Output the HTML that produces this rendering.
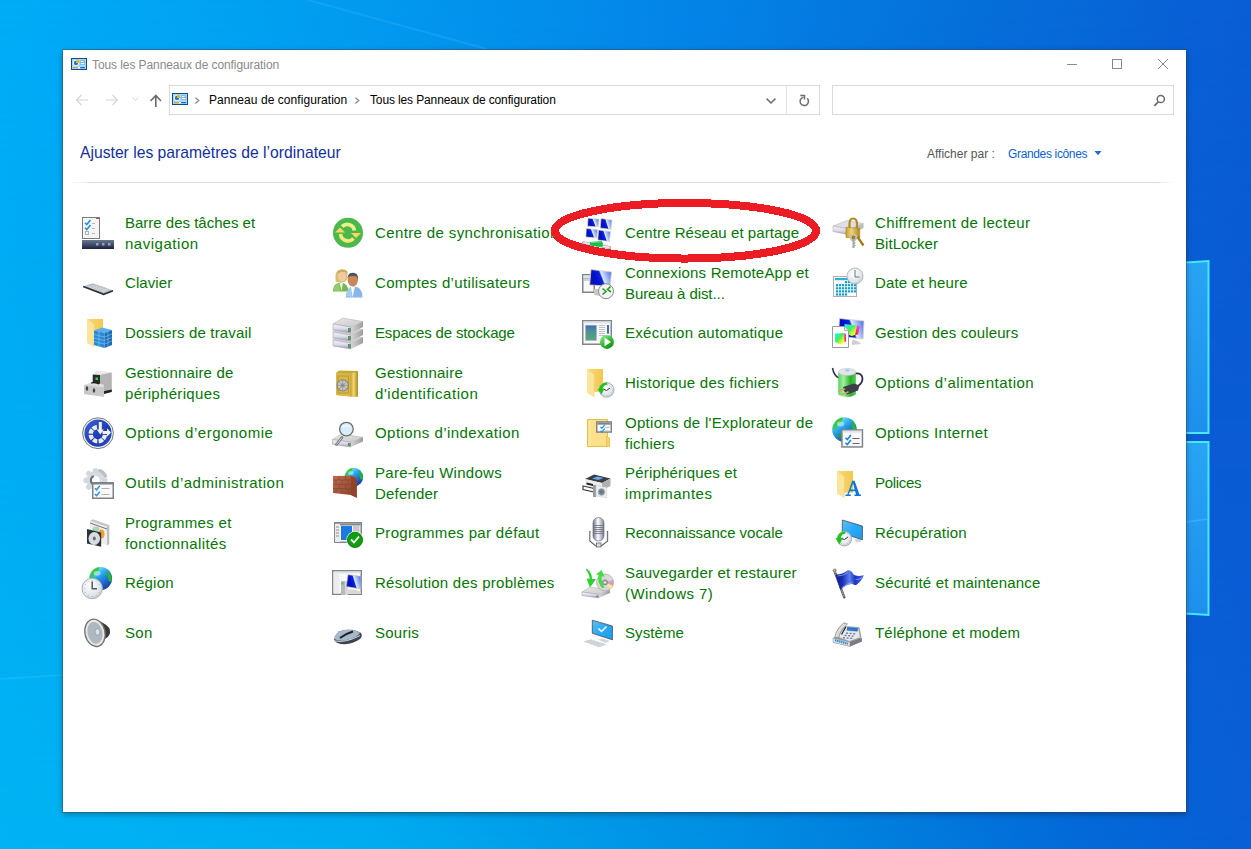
<!DOCTYPE html>
<html><head><meta charset="utf-8">
<style>
*{margin:0;padding:0;box-sizing:border-box}
html,body{width:1251px;height:849px;overflow:hidden;background:#0a80e0}
body{position:relative;font-family:"Liberation Sans",sans-serif}
#bg{position:absolute;left:0;top:0}
#win{position:absolute;left:63px;top:50px;width:1123px;height:762px;background:#fff;box-shadow:0 0 0 1px rgba(60,70,80,.4),0 2px 6px rgba(0,20,40,.4)}
.t{position:absolute;white-space:nowrap}
.it{position:absolute;color:#067406;font-size:15px;line-height:21px;white-space:nowrap}
.ic{position:absolute;overflow:visible}

</style></head><body>
<svg id="bg" width="1251" height="849" viewBox="0 0 1251 849">
<defs>
<linearGradient id="g1" gradientUnits="userSpaceOnUse" x1="0" y1="0" x2="1251" y2="300">
<stop offset="0" stop-color="#00acf6"/>
<stop offset="0.25" stop-color="#019cf0"/>
<stop offset="0.5" stop-color="#0386e8"/>
<stop offset="0.75" stop-color="#056ed8"/>
<stop offset="1" stop-color="#0a58d2"/>
</linearGradient>
<linearGradient id="g2" gradientUnits="userSpaceOnUse" x1="0" y1="849" x2="1251" y2="700">
<stop offset="0" stop-color="#00b4f4"/>
<stop offset="0.3" stop-color="#00acf0"/>
<stop offset="0.6" stop-color="#008ce2"/>
<stop offset="0.85" stop-color="#046ad8"/>
<stop offset="1" stop-color="#0a5ed6"/>
</linearGradient>
<linearGradient id="gv" x1="0" y1="0" x2="0" y2="1">
<stop offset="0" stop-color="#fff"/><stop offset="1" stop-color="#000"/>
</linearGradient>
<mask id="mv"><rect width="1251" height="849" fill="url(#gv)"/></mask>
</defs>
<rect width="1251" height="849" fill="url(#g2)"/>
<rect width="1251" height="849" fill="url(#g1)" mask="url(#mv)"/>
<path d="M308 0 L487 49" stroke="#30b0ff" stroke-width="2" opacity="0.35"/>
<path d="M0 679 L64 675" stroke="#40c8ff" stroke-width="1.5" opacity="0.35"/>
<!-- windows logo panes -->
<defs><linearGradient id="gp" x1="0" y1="0" x2="0" y2="1"><stop offset="0" stop-color="#28a4f4"/><stop offset="1" stop-color="#1e90ec"/></linearGradient></defs>
<path d="M1100 268 L1208.5 261 L1208.5 433 L1100 433Z" fill="url(#gp)" stroke="#48e8ff" stroke-width="2"/>
<path d="M1100 442 L1208.5 442 L1208.5 615 L1100 608Z" fill="url(#gp)" stroke="#48e8ff" stroke-width="2"/>
<path d="M1186 522 L1208 519" stroke="#50c0ff" stroke-width="1.5" opacity="0.5"/>
</svg>

<svg width="0" height="0" style="position:absolute"><defs>
<linearGradient id="gGlobe" x1="0.2" y1="0.1" x2="0.8" y2="0.95"><stop offset="0" stop-color="#7fe6ff"/><stop offset="0.35" stop-color="#28a8e8"/><stop offset="0.75" stop-color="#1b5fc8"/><stop offset="1" stop-color="#1a3a9a"/></linearGradient>
<radialGradient id="gClock" cx="0.4" cy="0.35" r="0.7"><stop offset="0" stop-color="#ffffff"/><stop offset="0.7" stop-color="#e2e6ea"/><stop offset="1" stop-color="#c4c9cf"/></radialGradient>
<linearGradient id="gDriveF" x1="0" y1="0" x2="0" y2="1"><stop offset="0" stop-color="#f4f4fb"/><stop offset="0.5" stop-color="#dcdcee"/><stop offset="1" stop-color="#9a9aa6"/></linearGradient>
<linearGradient id="gDriveT" x1="0" y1="0" x2="1" y2="1"><stop offset="0" stop-color="#e8e8e8"/><stop offset="1" stop-color="#c8c8c8"/></linearGradient>
<linearGradient id="gDriveS" x1="0" y1="0" x2="1" y2="0"><stop offset="0" stop-color="#d6d6d6"/><stop offset="1" stop-color="#9c9c9c"/></linearGradient>
<linearGradient id="gMon" x1="0" y1="0.3" x2="1" y2="0"><stop offset="0" stop-color="#0a14b0"/><stop offset="0.2" stop-color="#0010d0"/><stop offset="0.43" stop-color="#0a28d8"/><stop offset="0.5" stop-color="#e0eaff"/><stop offset="0.65" stop-color="#a8c0ff"/><stop offset="1" stop-color="#3a5ef0"/></linearGradient>
<linearGradient id="gMon10" x1="0" y1="0" x2="1" y2="1"><stop offset="0" stop-color="#5cc0f8"/><stop offset="0.5" stop-color="#2aa8f6"/><stop offset="1" stop-color="#1a9cf0"/></linearGradient>
<linearGradient id="gTask" x1="0" y1="0" x2="0" y2="1"><stop offset="0" stop-color="#6a7894"/><stop offset="1" stop-color="#1a2340"/></linearGradient>
<linearGradient id="gFold" x1="0" y1="0" x2="1" y2="0"><stop offset="0" stop-color="#f8d878"/><stop offset="1" stop-color="#f2c84e"/></linearGradient>
<linearGradient id="gGreenBall" x1="0.2" y1="0.1" x2="0.8" y2="1"><stop offset="0" stop-color="#7ee07e"/><stop offset="0.5" stop-color="#2cb82c"/><stop offset="1" stop-color="#138a13"/></linearGradient>
<linearGradient id="gGold" x1="0" y1="0" x2="1" y2="0"><stop offset="0" stop-color="#c8a030"/><stop offset="0.4" stop-color="#f0d670"/><stop offset="1" stop-color="#b08820"/></linearGradient>
<linearGradient id="gBatt" x1="0" y1="0" x2="1" y2="0"><stop offset="0" stop-color="#5ed05e"/><stop offset="0.3" stop-color="#9ef09e"/><stop offset="0.7" stop-color="#28b028"/><stop offset="1" stop-color="#58c858"/></linearGradient>
<linearGradient id="gFlag" x1="0" y1="0" x2="1" y2="0"><stop offset="0" stop-color="#0a1890"/><stop offset="0.25" stop-color="#1830b8"/><stop offset="0.5" stop-color="#6080e8"/><stop offset="0.7" stop-color="#1a34c0"/><stop offset="1" stop-color="#4a6ae8"/></linearGradient>
<linearGradient id="gBrick" x1="0" y1="0" x2="1" y2="1"><stop offset="0" stop-color="#c86a4a"/><stop offset="1" stop-color="#8a3a22"/></linearGradient>
<linearGradient id="gErgo" x1="0" y1="0" x2="1" y2="1"><stop offset="0" stop-color="#3a64d8"/><stop offset="0.6" stop-color="#1c3cb0"/><stop offset="1" stop-color="#3050d0"/></linearGradient>
<linearGradient id="gCube" x1="0" y1="0" x2="1" y2="1"><stop offset="0" stop-color="#20f0ff"/><stop offset="0.45" stop-color="#40f060"/><stop offset="0.8" stop-color="#ffff20"/><stop offset="1" stop-color="#ffd000"/></linearGradient>
<linearGradient id="gCubeS" x1="0" y1="0" x2="0" y2="1"><stop offset="0" stop-color="#ff40ff"/><stop offset="1" stop-color="#ff2020"/></linearGradient>
</defs></svg>
<div id="win">
<svg style="position:absolute;left:0;top:0" width="1123" height="762" viewBox="63 50 1123 762">
<!-- title icon -->
<g transform="translate(71,58)">
<rect x="0.5" y="0.5" width="15" height="11" fill="#a9d9fa" stroke="#0c4c8c"/>
<circle cx="5" cy="5" r="2.9" fill="#fff"/>
<circle cx="5" cy="5" r="2.2" fill="#1a7ad6"/>
<path d="M5 1.6 A3.4 3.4 0 0 1 8.4 5 L5 5Z" fill="#f8b014"/>
<rect x="9.2" y="2.3" width="4.8" height="4.4" fill="#5eb4f2"/>
<rect x="9.8" y="3" width="3.6" height="1.1" fill="#fff"/><rect x="12.6" y="3" width="1" height="1.1" fill="#f08a10"/>
<rect x="9.8" y="5" width="3.6" height="1.1" fill="#fff"/>
<rect x="2" y="9" width="5" height="1.2" fill="#f29a10"/><rect x="7" y="9" width="2" height="1.2" fill="#fff"/><rect x="9.2" y="9" width="4.8" height="1.2" fill="#1a6ad0"/>
</g>
<!-- window controls -->
<rect x="1067" y="64" width="10" height="1" fill="#8a8a8a"/>
<rect x="1112.5" y="59.5" width="9" height="9" fill="none" stroke="#8a8a8a" stroke-width="1"/>
<path d="M1158 59 L1168 69 M1168 59 L1158 69" stroke="#8a8a8a" stroke-width="1"/>
<!-- nav arrows -->
<path d="M76.5 100 H88 M81.5 95 L76.5 100 L81.5 105" fill="none" stroke="#d4d4d4" stroke-width="1.2"/>
<path d="M106 100 H117.5 M112.5 95 L117.5 100 L112.5 105" fill="none" stroke="#d4d4d4" stroke-width="1.2"/>
<path d="M132.5 97.5 L135.5 100.5 L138.5 97.5" fill="none" stroke="#d4d4d4" stroke-width="1"/>
<path d="M155.8 107 V96 M150.5 101 L155.8 95.5 L161 101" fill="none" stroke="#6b6b6b" stroke-width="1.6"/>
<!-- address box -->
<rect x="169.5" y="85.5" width="650" height="29" fill="#fff" stroke="#d9d9d9"/>
<rect x="786" y="86" width="1" height="28" fill="#e3e3e3"/>
<g transform="translate(172,93)">
<rect x="0.5" y="0.5" width="15" height="11" fill="#a9d9fa" stroke="#0c4c8c"/>
<circle cx="5" cy="5" r="2.9" fill="#fff"/>
<circle cx="5" cy="5" r="2.2" fill="#1a7ad6"/>
<path d="M5 1.6 A3.4 3.4 0 0 1 8.4 5 L5 5Z" fill="#f8b014"/>
<rect x="9.2" y="2.3" width="4.8" height="4.4" fill="#5eb4f2"/>
<rect x="9.8" y="3" width="3.6" height="1.1" fill="#fff"/><rect x="12.6" y="3" width="1" height="1.1" fill="#f08a10"/>
<rect x="9.8" y="5" width="3.6" height="1.1" fill="#fff"/>
<rect x="2" y="9" width="5" height="1.2" fill="#f29a10"/><rect x="7" y="9" width="2" height="1.2" fill="#fff"/><rect x="9.2" y="9" width="4.8" height="1.2" fill="#1a6ad0"/>
</g>
<path d="M195.3 97.7 L198.8 100.6 L195.3 103.5" fill="none" stroke="#8a8a8a" stroke-width="1.3"/>
<path d="M355.3 97.7 L358.8 100.6 L355.3 103.5" fill="none" stroke="#8a8a8a" stroke-width="1.3"/>
<path d="M766.6 98.6 L771 103 L775.4 98.6" fill="none" stroke="#6e6e6e" stroke-width="1.5"/>
<path d="M807.2 98.3 A4.2 4.2 0 1 1 803.4 97.2" fill="none" stroke="#6e6e6e" stroke-width="1.5"/>
<path d="M800.3 95.6 H804.5 V99.6" fill="none" stroke="#6e6e6e" stroke-width="1.5"/>
<!-- search box -->
<rect x="832.5" y="85.5" width="341" height="29" fill="#fff" stroke="#d9d9d9"/>
<circle cx="1160.8" cy="99" r="3.6" fill="none" stroke="#6b6b6b" stroke-width="1.5"/>
<path d="M1158.3 101.8 L1154.3 105.8" stroke="#6b6b6b" stroke-width="1.8"/>
<!-- separator -->
<defs><linearGradient id="sep" x1="0" x2="1"><stop offset="0.005" stop-color="#d0e0f4" stop-opacity="0"/><stop offset="0.03" stop-color="#d0e0f4"/><stop offset="0.97" stop-color="#d0e0f4"/><stop offset="0.99" stop-color="#d0e0f4" stop-opacity="0"/></linearGradient></defs>
<rect x="63" y="182" width="1123" height="1" fill="url(#sep)"/>
<path d="M1094.5 151 L1101.5 151 L1098 155.2Z" fill="#1a6ad8"/>
</svg>
<div class="t" style="left:29px;top:8px;font-size:12px;color:#8a8a8a;letter-spacing:-0.09px">Tous les Panneaux de configuration</div>
<div class="t" style="left:146px;top:43px;font-size:12px;color:#000;letter-spacing:0.065px">Panneau de configuration</div>
<div class="t" style="left:307px;top:43px;font-size:12px;color:#000;letter-spacing:-0.13px">Tous les Panneaux de configuration</div>
<div class="t" style="left:17px;top:94px;font-size:15.7px;color:#12309c">Ajuster les paramètres de l’ordinateur</div>
<div class="t" style="left:864px;top:97px;font-size:12px;color:#555">Afficher par :</div>
<div class="t" style="left:945px;top:97px;font-size:12px;color:#0b5fd4;letter-spacing:-0.35px">Grandes icônes</div>
</div>

<div class="it" style="left:125px;top:212px;letter-spacing:0.0px">Barre des tâches et</div><div class="it" style="left:125px;top:233px;letter-spacing:0.522px">navigation</div><svg class="ic" style="left:82px;top:217px" width="32" height="32" viewBox="0 0 32 32"><rect x="0.5" y="0.5" width="17" height="21" fill="#f6f6f6" stroke="#7a7a7a"/><rect x="14" y="1" width="3" height="1" fill="#e04040"/><path d="M3 5.8 L4.8 7.6 L8.4 3.1" fill="none" stroke="#2a8ee0" stroke-width="1.62"/><path d="M3 10.8 L4.8 12.6 L8.4 8.1" fill="none" stroke="#2a8ee0" stroke-width="1.62"/><rect x="3.5" y="14.5" width="3" height="3" fill="none" stroke="#b0b0b0"/><path d="M10 6.5H13M10 11.5H13M10 16.5H13" stroke="#b8b8b8"/><rect x="0" y="23" width="32" height="9" fill="url(#gTask)"/><rect x="14" y="26" width="2.5" height="2.5" fill="#9aa2b0"/><rect x="20" y="26" width="2.5" height="2.5" fill="#9aa2b0"/><rect x="26" y="26" width="2.5" height="2.5" fill="#9aa2b0"/></svg><div class="it" style="left:125px;top:272px;letter-spacing:0.083px">Clavier</div><svg class="ic" style="left:82px;top:267px" width="32" height="32" viewBox="0 0 32 32"><path d="M1.2 19.2 L10.7 16.2 L31 23.4 L21.7 26.8Z" fill="#d0d4da"/><path d="M3 19.5 L11 17 L29 23.3 L21.5 25.8Z" fill="none" stroke="#9aa0a8" stroke-width="0.8" stroke-dasharray="1.2 0.8"/><path d="M6 19.3 L13 17.2 M9 20.3 L16 18.2 M13 21.8 L20 19.5 M17 23.2 L24 20.8" stroke="#a8aeb6" stroke-width="0.7" stroke-dasharray="1 1"/><path d="M1.2 19.6 L21.7 27.3 L31 23.8" fill="none" stroke="#2a3038" stroke-width="1.6"/></svg><div class="it" style="left:125px;top:322px;letter-spacing:0.167px">Dossiers de travail</div><svg class="ic" style="left:82px;top:317px" width="32" height="32" viewBox="0 0 32 32"><rect x="5" y="2" width="16" height="23" fill="url(#gFold)"/><path d="M5 2 L12.5 8 L12 30 L5 26Z" fill="#fbe49c"/><path d="M12.5 8 L12 30" stroke="#f0d070" stroke-width="0.6"/><path d="M12 13.5 L20 10.5 L30 13 L22.5 16Z" fill="#5ab0ea"/><path d="M12 13.5 L22.5 16 L22.5 31 L12 28Z" fill="#2a8ad8"/><path d="M22.5 16 L30 13 L30 28 L22.5 31Z" fill="#1a6cb8"/><path d="M12 17.5 L22.5 20 M12 21 L22.5 23.5 M12 24.5 L22.5 27 M22.5 20 L30 17 M22.5 23.5 L30 20.5 M22.5 27 L30 24 M17 14.7 V29.3 M26 14.5 V29.5" stroke="#8ccaf4" stroke-width="0.6"/></svg><div class="it" style="left:125px;top:362px;letter-spacing:0.171px">Gestionnaire de</div><div class="it" style="left:125px;top:383px;letter-spacing:0.333px">périphériques</div><svg class="ic" style="left:82px;top:367px" width="32" height="32" viewBox="0 0 32 32"><path d="M10.7 7.5 L15 3.5 L29.8 5.5 L26 9Z" fill="#e8e8e8"/><path d="M18 8 L29.8 5.5 L29.8 23 L18 26Z" fill="#b4b4b4"/><path d="M10.7 7.5 L18 8 L18 17 L10.7 16Z" fill="#2a2a2a"/><rect x="13.5" y="10.5" width="2.5" height="2.5" fill="#28e028"/><path d="M18 25 L29.8 22.5 L29.8 25 L20 27.5Z" fill="#222"/><path d="M2 18 L9 15.5 L21.8 17.5 L21.8 29.8 L2 27Z" fill="#dcdcdc"/><path d="M2 18 L21.8 20.5 L21.8 29.8 L2 27Z" fill="#c8c8c8"/><path d="M9 16 Q13 14.8 17 17" fill="none" stroke="#111" stroke-width="1.2"/><ellipse cx="5" cy="21.5" rx="1.2" ry="2.2" fill="#444"/><ellipse cx="12" cy="23.5" rx="1.2" ry="2.2" fill="#444"/></svg><div class="it" style="left:125px;top:422px;letter-spacing:0.528px">Options d’ergonomie</div><svg class="ic" style="left:82px;top:417px" width="32" height="32" viewBox="0 0 32 32"><circle cx="16" cy="16.2" r="15.4" fill="#f4f4f4" stroke="#7a7a7a" stroke-width="1"/><circle cx="16" cy="16.2" r="13.6" fill="url(#gErgo)"/><path d="M25.06 18.01 A9.3 9.3 0 0 1 22.82 23.30 L19.57 20.48 A5.0 5.0 0 0 0 20.78 17.64Z" fill="#ecebe4"/><path d="M22.14 24.00 A9.3 9.3 0 0 1 16.93 26.43 L16.41 22.16 A5.0 5.0 0 0 0 19.21 20.86Z" fill="#ecebe4"/><path d="M15.15 26.48 A9.3 9.3 0 0 1 9.82 24.32 L12.59 21.03 A5.0 5.0 0 0 0 15.45 22.19Z" fill="#ecebe4"/><path d="M8.78 23.30 A9.3 9.3 0 0 1 6.54 18.01 L10.82 17.64 A5.0 5.0 0 0 0 12.03 20.48Z" fill="#ecebe4"/><path d="M6.52 16.55 A9.3 9.3 0 0 1 8.68 11.22 L11.97 13.99 A5.0 5.0 0 0 0 10.81 16.85Z" fill="#ecebe4"/><path d="M9.46 10.40 A9.3 9.3 0 0 1 14.67 7.97 L15.19 12.24 A5.0 5.0 0 0 0 12.39 13.54Z" fill="#ecebe4"/><path d="M16.8 5 H19.8 V12.5 H21.8 L18.3 17.5 L14.8 12.5 H16.8Z" fill="#f2f2ee"/><path d="M20.5 14 H25 V11.3 L29 15.5 L25 19.7 V17 H20.5Z" fill="#f2f2ee"/></svg><div class="it" style="left:125px;top:472px;letter-spacing:0.509px">Outils d’administration</div><svg class="ic" style="left:82px;top:467px" width="32" height="32" viewBox="0 0 32 32"><g transform="translate(13.4 13.3)"><circle r="9.2" fill="#d6dce2"/><rect x="-2.6" y="-12" width="5.2" height="5" rx="1.6" fill="#d2d8de" transform="rotate(0)"/><rect x="-2.6" y="-12" width="5.2" height="5" rx="1.6" fill="#d2d8de" transform="rotate(45)"/><rect x="-2.6" y="-12" width="5.2" height="5" rx="1.6" fill="#d2d8de" transform="rotate(90)"/><rect x="-2.6" y="-12" width="5.2" height="5" rx="1.6" fill="#d2d8de" transform="rotate(135)"/><rect x="-2.6" y="-12" width="5.2" height="5" rx="1.6" fill="#d2d8de" transform="rotate(180)"/><rect x="-2.6" y="-12" width="5.2" height="5" rx="1.6" fill="#d2d8de" transform="rotate(225)"/><rect x="-2.6" y="-12" width="5.2" height="5" rx="1.6" fill="#d2d8de" transform="rotate(270)"/><rect x="-2.6" y="-12" width="5.2" height="5" rx="1.6" fill="#d2d8de" transform="rotate(315)"/><circle r="4.4" fill="#fff"/><path d="M-1.5 -4.2 A4.4 4.4 0 0 0 -1.5 4.2" stroke="#6a6e72" stroke-width="2" fill="none"/><path d="M3 -10 A10 10 0 0 1 10.5 -3" stroke="#b8bec4" stroke-width="3" fill="none"/></g><rect x="10.75" y="15.75" width="20.5" height="15.5" fill="#fafafa" stroke="#7e8388" stroke-width="1.5"/><rect x="10" y="15" width="22" height="2.5" fill="#7e8388"/><path d="M13 21.200000000000003 L14.6 22.8 L17.8 18.8" fill="none" stroke="#2a8ee0" stroke-width="1.4400000000000002"/><path d="M13 27.1 L14.6 28.7 L17.8 24.7" fill="none" stroke="#2a8ee0" stroke-width="1.4400000000000002"/><path d="M19.5 21.5H27.5M19.5 27.5H27.5" stroke="#a8a8a8" stroke-width="0.9"/></svg><div class="it" style="left:125px;top:512px;letter-spacing:0.317px">Programmes et</div><div class="it" style="left:125px;top:533px;letter-spacing:0.379px">fonctionnalités</div><svg class="ic" style="left:82px;top:517px" width="32" height="32" viewBox="0 0 32 32"><path d="M8 4 L10.5 2.2 L27.3 8 L25 10Z" fill="#c8c8c8"/><path d="M8 4 L25 10 L25 28.5 L8 22Z" fill="#eeeeee"/><path d="M25 10 L27.3 8 L27.3 27 L25 28.5Z" fill="#bdbdbd"/><path d="M8 6 L25 12" stroke="#555" stroke-width="0.8"/><ellipse cx="14" cy="12" rx="3.5" ry="2.5" fill="#a8d8b0"/><ellipse cx="19.5" cy="17" rx="3" ry="4.5" fill="#f0a030"/><path d="M5 12 L19.2 15.5 L19.2 29.8 L5 26.5Z" fill="#2a3440"/><ellipse cx="12.3" cy="21.5" rx="5.8" ry="6.5" fill="#d8dcdf"/><ellipse cx="12.3" cy="21.5" rx="1.5" ry="2" fill="#60707a"/></svg><div class="it" style="left:125px;top:572px;letter-spacing:0.2px">Région</div><svg class="ic" style="left:82px;top:567px" width="32" height="32" viewBox="0 0 32 32"><circle cx="18.6" cy="11.5" r="11.5" fill="url(#gGlobe)"/><path d="M7.6750000000000025 10.35 C9.4 3.450000000000001 12.850000000000001 0.5750000000000011 17.450000000000003 0.23000000000000043 L15.725000000000001 5.175 L12.275000000000002 6.325 L10.550000000000002 12.075Z" fill="#3ac83a"/><path d="M24.925 2.875 C28.375 5.75 30.1 10.35 29.525 14.95 L26.65 13.8 L25.5 8.05Z" fill="#2ab82a"/><path d="M12.275000000000002 15.524999999999999 L17.450000000000003 16.675 L18.025000000000002 21.275 C15.150000000000002 20.700000000000003 12.850000000000001 18.975 12.275000000000002 15.524999999999999Z" fill="#2aa02a"/><ellipse cx="15.150000000000002" cy="6.325" rx="3.4499999999999997" ry="2.3000000000000003" fill="#fff" opacity="0.45"/><circle cx="10.2" cy="21.5" r="10.2" fill="url(#gClock)" stroke="#a8b0b8" stroke-width="1"/><circle cx="18.16" cy="21.50" r="0.45" fill="#8a96a0"/><circle cx="17.09" cy="25.48" r="0.45" fill="#8a96a0"/><circle cx="14.18" cy="28.39" r="0.45" fill="#8a96a0"/><circle cx="10.20" cy="29.46" r="0.45" fill="#8a96a0"/><circle cx="6.22" cy="28.39" r="0.45" fill="#8a96a0"/><circle cx="3.31" cy="25.48" r="0.45" fill="#8a96a0"/><circle cx="2.24" cy="21.50" r="0.45" fill="#8a96a0"/><circle cx="3.31" cy="17.52" r="0.45" fill="#8a96a0"/><circle cx="6.22" cy="14.61" r="0.45" fill="#8a96a0"/><circle cx="10.20" cy="13.54" r="0.45" fill="#8a96a0"/><circle cx="14.18" cy="14.61" r="0.45" fill="#8a96a0"/><circle cx="17.09" cy="17.52" r="0.45" fill="#8a96a0"/><path d="M10.2 14.5 V21.8 H15" fill="none" stroke="#4a5a66" stroke-width="1.5"/></svg><div class="it" style="left:125px;top:622px;letter-spacing:0.3px">Son</div><svg class="ic" style="left:82px;top:617px" width="32" height="32" viewBox="0 0 32 32"><path d="M13 2 L21 6 Q29 10 28 16 Q27 21 20 23 L16 28Z" fill="#3a3a3a"/><ellipse cx="13" cy="15.8" rx="10" ry="13.8" transform="rotate(-12 13 15.8)" fill="#e8e8e8" stroke="#707070" stroke-width="1.3"/><ellipse cx="13" cy="15.8" rx="7.5" ry="11" transform="rotate(-12 13 15.8)" fill="#aeb8c0"/><ellipse cx="15.5" cy="15" rx="2.5" ry="3.2" fill="#d0e4f0" stroke="#888" stroke-width="0.6"/></svg><div class="it" style="left:375px;top:222px;letter-spacing:0.375px">Centre de synchronisation</div><svg class="ic" style="left:332px;top:217px" width="32" height="32" viewBox="0 0 32 32"><circle cx="16" cy="15.8" r="15" fill="#4cb84c"/><path d="M10 9.5 A7.5 7.5 0 0 1 22.5 13.5" fill="none" stroke="#eaf08a" stroke-width="3.6"/><path d="M21.5 21.5 A7.5 7.5 0 0 1 8.5 17" fill="none" stroke="#f2ea80" stroke-width="3.6"/><path d="M3 15.5 L8 10.5 L13 15.5Z" fill="#fad860"/><path d="M19 16 L29 16 L24 21Z" fill="#fad860"/></svg><div class="it" style="left:375px;top:272px;letter-spacing:0.343px">Comptes d’utilisateurs</div><svg class="ic" style="left:332px;top:267px" width="32" height="32" viewBox="0 0 32 32"><path d="M1 24.5 Q1 16 8.5 15.5 Q16 16 16.5 24.5Z" fill="#78b850"/><path d="M1.5 23.5 Q2 17.5 7 16.3 L8 24Z" fill="#94cc6c"/><path d="M7.5 16 L9.5 24 L11 16Z" fill="#e8f0f0"/><path d="M3.8 15 Q2.5 6 5.5 3.8 Q9 1.2 13.5 3 Q16.5 4.8 15.5 7 L14.8 13 Q12 16 9 15.5Z" fill="#d8c070"/><ellipse cx="10" cy="9.3" rx="4" ry="5.2" fill="#f2caa2"/><path d="M6 6.5 Q9.5 3.8 14.8 5.5 L15 4 Q10 1.5 5.8 4.2Z" fill="#c8ac58"/><path d="M14 30.5 Q14 19.5 22 19.5 Q30.5 19.5 30.5 30.5Z" fill="#88b6e6"/><path d="M14.5 29 Q15 21 19 20 L20 30Z" fill="#a8ccf0"/><path d="M19 20 L20.5 30.5 L23 20Z" fill="#f4f8fa"/><ellipse cx="20.8" cy="13" rx="5.2" ry="6.5" fill="#c88858"/><path d="M15.5 11.5 Q15.5 5.8 21 5.8 Q26.5 6 26 12.5 L24.5 9.5 Q20.5 8.3 16.5 9.8Z" fill="#50545a"/></svg><div class="it" style="left:375px;top:322px;letter-spacing:-0.15px">Espaces de stockage</div><svg class="ic" style="left:332px;top:317px" width="32" height="32" viewBox="0 0 32 32"><path d="M1 23 L10.600000000000001 17 L31 20.6 L19.0 26.0Z" fill="url(#gDriveT)" stroke="#aaa" stroke-width="0.5"/><path d="M1 23 L19.0 26.0 L19.0 32 L1 29.0Z" fill="url(#gDriveF)" stroke="#999" stroke-width="0.5"/><path d="M19.0 26.0 L31 20.6 L31 26 L19.0 32Z" fill="url(#gDriveS)"/><rect x="16.5" y="27.5" width="2" height="3.0" fill="#22cc22" stroke="#502a80" stroke-width="0.4"/><path d="M1 15 L10.600000000000001 9 L31 12.6 L19.0 18.0Z" fill="url(#gDriveT)" stroke="#aaa" stroke-width="0.5"/><path d="M1 15 L19.0 18.0 L19.0 24 L1 21.0Z" fill="url(#gDriveF)" stroke="#999" stroke-width="0.5"/><path d="M19.0 18.0 L31 12.6 L31 18 L19.0 24Z" fill="url(#gDriveS)"/><rect x="16.5" y="19.5" width="2" height="3.0" fill="#22cc22" stroke="#502a80" stroke-width="0.4"/><path d="M1 7 L10.600000000000001 1 L31 4.6 L19.0 10.0Z" fill="url(#gDriveT)" stroke="#aaa" stroke-width="0.5"/><path d="M1 7 L19.0 10.0 L19.0 16 L1 13.0Z" fill="url(#gDriveF)" stroke="#999" stroke-width="0.5"/><path d="M19.0 10.0 L31 4.6 L31 10 L19.0 16Z" fill="url(#gDriveS)"/><rect x="16.5" y="11.5" width="2" height="3.0" fill="#22cc22" stroke="#502a80" stroke-width="0.4"/></svg><div class="it" style="left:375px;top:362px;letter-spacing:0.245px">Gestionnaire</div><div class="it" style="left:375px;top:383px;letter-spacing:0.547px">d'identification</div><svg class="ic" style="left:332px;top:367px" width="32" height="32" viewBox="0 0 32 32"><path d="M4 6 L7 3.5 L26 4 L26 29.5 L18.5 29.5 L4 28Z" fill="#c8a830"/><path d="M4 6 L18.5 6.5 L18.5 29.5 L4 28Z" fill="#d8b848"/><path d="M18.5 6.5 L26 4.5 L26 29.5 L18.5 29.5Z" fill="url(#gGold)"/><rect x="6" y="9" width="10.5" height="17" fill="none" stroke="#b89020" stroke-width="0.8"/><circle cx="10.7" cy="18.4" r="5.6" fill="#c8c8c8" stroke="#888" stroke-width="1.2"/><circle cx="10.7" cy="18.4" r="2.2" fill="#a8a8a8"/><path d="M10.7 13.5V23.3M5.8 18.4H15.6M7.2 14.9L14.2 21.9M14.2 14.9L7.2 21.9" stroke="#888" stroke-width="0.7"/></svg><div class="it" style="left:375px;top:422px;letter-spacing:0.442px">Options d’indexation</div><svg class="ic" style="left:332px;top:417px" width="32" height="32" viewBox="0 0 32 32"><path d="M0.5 22.5 L9.3 17 L31.0 20.3 L18.8 25.25Z" fill="url(#gDriveT)" stroke="#aaa" stroke-width="0.5"/><path d="M0.5 22.5 L18.8 25.25 L18.8 30 L0.5 27.25Z" fill="url(#gDriveF)" stroke="#999" stroke-width="0.5"/><path d="M18.8 25.25 L31.0 20.3 L31.0 24.5 L18.8 30Z" fill="url(#gDriveS)"/><rect x="16.3" y="26.75" width="2" height="1.75" fill="#22cc22" stroke="#502a80" stroke-width="0.4"/><path d="M10 20.5 L4.5 27.5" stroke="#777" stroke-width="2.8" stroke-linecap="round"/><path d="M10 20.5 L4.5 27.5" stroke="#ddd" stroke-width="1"/><circle cx="14.4" cy="12.1" r="6.8" fill="#d8ecfc" stroke="#6a6e72" stroke-width="1.3"/><path d="M10 10 Q14 8 18 9" stroke="#fff" stroke-width="1" fill="none"/></svg><div class="it" style="left:375px;top:462px;letter-spacing:0.273px">Pare-feu Windows</div><div class="it" style="left:375px;top:483px;letter-spacing:0.2px">Defender</div><svg class="ic" style="left:332px;top:467px" width="32" height="32" viewBox="0 0 32 32"><circle cx="21.8" cy="10.1" r="9.3" fill="url(#gGlobe)"/><path d="M12.965 9.17 C14.36 3.59 17.15 1.2649999999999988 20.87 0.9859999999999989 L19.475 4.9849999999999985 L16.685 5.914999999999999 L15.290000000000001 10.565Z" fill="#3ac83a"/><path d="M26.915000000000003 3.124999999999999 C29.705000000000002 5.449999999999999 31.1 9.17 30.635 12.89 L28.310000000000002 11.96 L27.380000000000003 7.31Z" fill="#2ab82a"/><path d="M16.685 13.355 L20.87 14.285 L21.335 18.005 C19.01 17.54 17.15 16.145 16.685 13.355Z" fill="#2aa02a"/><ellipse cx="19.01" cy="5.914999999999999" rx="2.79" ry="1.8600000000000003" fill="#fff" opacity="0.45"/><path d="M1 9 L19 8.7 L24.7 11.2 L24.7 30.7 L19 28 L1 26Z" fill="url(#gBrick)"/><path d="M19 8.7 L24.7 11.2 L24.7 30.7 L19 28Z" fill="#9a4026"/><path d="M1 13H19M1 17.3H19M1 21.6H19M19 13L24.7 15.3M19 17.3L24.7 19.6M19 21.6L24.7 24M19 25.8L24.7 28.2M7 9V13M13.5 9V13M4 13V17.3M10 13V17.3M16 13V17.3M7 17.3V21.6M13.5 17.3V21.6M4 21.6V26M10 21.6V26M16 21.6V26" stroke="#6a5048" stroke-width="0.7"/></svg><div class="it" style="left:375px;top:522px;letter-spacing:0.33px">Programmes par défaut</div><svg class="ic" style="left:332px;top:517px" width="32" height="32" viewBox="0 0 32 32"><rect x="2.75" y="5.75" width="26.5" height="19.5" fill="#fafafa" stroke="#80868c" stroke-width="1.5"/><rect x="3.5" y="6.5" width="25" height="2" fill="#80868c"/><rect x="3" y="7" width="5" height="18" fill="#ececec"/><path d="M4 10H7M4 13H7M4 16H7M4 19H7M21 10H27.5M21 12H27.5M21 14H27.5" stroke="#8a8a8a" stroke-width="0.9"/><rect x="9" y="9" width="11" height="14" fill="#1a7ae0"/><circle cx="23" cy="22.9" r="8.6" fill="#fff"/><circle cx="23" cy="22.9" r="7.6" fill="#0ea00e" stroke="#066a06" stroke-width="0.8"/><path d="M19 22.5 L22 25.5 L27 19.5" fill="none" stroke="#fff" stroke-width="1.8"/></svg><div class="it" style="left:375px;top:572px;letter-spacing:0.257px">Résolution des problèmes</div><svg class="ic" style="left:332px;top:567px" width="32" height="32" viewBox="0 0 32 32"><rect x="0.75" y="3.75" width="28.5" height="23.5" fill="#fafafa" stroke="#80868c" stroke-width="1.5"/><rect x="1.5" y="4.5" width="27" height="2" fill="#dfe3e8"/><rect x="1.5" y="6.5" width="6" height="20" fill="#ededed"/><path d="M9 14 L13 14 L13 28 L9 28Z" fill="#b8b8c4"/><rect x="9.5" y="15.5" width="2" height="2" fill="#30d030"/><path d="M13 14 L16 14.5 L16 28 L13 28Z" fill="#d8d8d8"/><path d="M16 7.7 L29 9.3 L29 22 L14.3 19.5Z" fill="url(#gMon)" stroke="#c8c0a0" stroke-width="0.6"/><path d="M15 23 Q22 21 29 25 L29 27 L14 27Z" fill="#d8d8d8"/></svg><div class="it" style="left:375px;top:622px;letter-spacing:0.24px">Souris</div><svg class="ic" style="left:332px;top:617px" width="32" height="32" viewBox="0 0 32 32"><path d="M2 22.5 Q3 15 12 13 Q22 11.5 29 16 Q31 19 28 22 Q21 27 13 27.3 Q4 27.5 2 22.5Z" fill="#3c4650"/><path d="M2 22 Q3 15 12 13 Q22 11.5 28 16 Q25 20 17 22.5 Q8 25 2 22Z" fill="#a8b8cc"/><path d="M8 21 Q14 16.5 21 14.5" stroke="#222" stroke-width="2" fill="none"/><path d="M3 24 Q14 26 28 18.5" stroke="#d8dde2" stroke-width="1" fill="none"/><circle cx="20" cy="13.3" r="0.8" fill="#30c060"/></svg><div class="it" style="left:625px;top:222px;letter-spacing:0.065px">Centre Réseau et partage</div><svg class="ic" style="left:582px;top:217px" width="32" height="32" viewBox="0 0 32 32"><path d="M6 1.2 L17 2 L16.5 10 L5.5 9.2Z" fill="url(#gMon)" stroke="#e8e0b8" stroke-width="0.7"/><path d="M19 1.5 L30 3 L29.2 12.5 L18.2 11Z" fill="url(#gMon)" stroke="#e8e0b8" stroke-width="0.7"/><path d="M4.3 11.5 L15.5 12.5 L15 21 L3.8 20Z" fill="url(#gMon)" stroke="#e8e0b8" stroke-width="0.7"/><path d="M16.5 13 L28.5 14.5 L27.5 24.5 L15.8 23Z" fill="url(#gMon)" stroke="#e8e0b8" stroke-width="0.7"/><path d="M1.5 25.8 L27.5 30.5" stroke="#a8b0b4" stroke-width="3.2" stroke-linecap="round"/><path d="M1.5 25.8 L27.5 30.5" stroke="#eef2f4" stroke-width="1.6"/><path d="M8 25 L14.5 24.5 L19.5 24 L21 26.5 L20.5 30 L8 28.5Z" fill="#18c048"/><path d="M9 25.5 L19 25" stroke="#70e890" stroke-width="0.8"/></svg><div class="it" style="left:625px;top:262px;letter-spacing:0.205px">Connexions RemoteApp et</div><div class="it" style="left:625px;top:283px;letter-spacing:-0.073px">Bureau à dist...</div><svg class="ic" style="left:582px;top:267px" width="32" height="32" viewBox="0 0 32 32"><rect x="0.75" y="7.75" width="11.5" height="17.5" fill="#fafafa" stroke="#80868c" stroke-width="1.5"/><rect x="1.5" y="8.5" width="10" height="2" fill="#dfe3e8"/><path d="M1.5 11.3H12M1.5 13H12" stroke="#9098a0" stroke-width="0.8"/><path d="M9 2.6 L29.5 5 L28 19 L7.7 18Z" fill="url(#gMon)" stroke="#d8d0a8" stroke-width="0.8"/><path d="M12 22 Q16 21 20 24 L18 29 L12 28Z" fill="#c8c8c8"/><circle cx="24" cy="24.2" r="7.5" fill="#f4f4f4" stroke="#8a8a8a" stroke-width="1"/><path d="M20.5 21.5 L24 24.5 L20.5 27.5M28.5 19.5 L25.5 22.5 L29 25" fill="none" stroke="#22a022" stroke-width="1.6"/></svg><div class="it" style="left:625px;top:322px;letter-spacing:0.27px">Exécution automatique</div><svg class="ic" style="left:582px;top:317px" width="32" height="32" viewBox="0 0 32 32"><rect x="0.75" y="3.75" width="28.5" height="23.5" fill="#fafafa" stroke="#80868c" stroke-width="1.5"/><rect x="1.5" y="4.5" width="27" height="2" fill="#dfe3e8"/><defs><linearGradient id="gPic" x1="0" y1="0" x2="0" y2="1"><stop offset="0" stop-color="#3a6ab8"/><stop offset="0.35" stop-color="#4a9098"/><stop offset="1" stop-color="#58a878"/></linearGradient></defs><rect x="3.5" y="8.2" width="11" height="15.3" fill="url(#gPic)" stroke="#b8b0d8" stroke-width="0.6"/><path d="M17 8.5H23M17 10.5H23M17 12.5H23M17 14.5H23M17 16.5H23M17 18.5H23" stroke="#b0b0b0" stroke-width="0.8"/><rect x="25" y="8" width="2" height="8.7" fill="#3a70b0"/><circle cx="24.9" cy="24.9" r="7" fill="url(#gGreenBall)"/><path d="M22.5 20.5 L29 24.9 L22.5 29.3Z" fill="#fff"/></svg><div class="it" style="left:625px;top:372px;letter-spacing:0.286px">Historique des fichiers</div><svg class="ic" style="left:582px;top:367px" width="32" height="32" viewBox="0 0 32 32"><rect x="5" y="2" width="16" height="23" fill="url(#gFold)"/><path d="M5 2 L12.5 8 L12 30 L5 26Z" fill="#fbe49c"/><path d="M12.5 8 L12 30" stroke="#f0d070" stroke-width="0.6"/><circle cx="24.7" cy="22.9" r="7.3" fill="url(#gClock)" stroke="#a8b0b8" stroke-width="1"/><circle cx="30.39" cy="22.90" r="0.35" fill="#8a96a0"/><circle cx="29.63" cy="25.75" r="0.35" fill="#8a96a0"/><circle cx="27.55" cy="27.83" r="0.35" fill="#8a96a0"/><circle cx="24.70" cy="28.59" r="0.35" fill="#8a96a0"/><circle cx="21.85" cy="27.83" r="0.35" fill="#8a96a0"/><circle cx="19.77" cy="25.75" r="0.35" fill="#8a96a0"/><circle cx="19.01" cy="22.90" r="0.35" fill="#8a96a0"/><circle cx="19.77" cy="20.05" r="0.35" fill="#8a96a0"/><circle cx="21.85" cy="17.97" r="0.35" fill="#8a96a0"/><circle cx="24.70" cy="17.21" r="0.35" fill="#8a96a0"/><circle cx="27.55" cy="17.97" r="0.35" fill="#8a96a0"/><circle cx="29.63" cy="20.05" r="0.35" fill="#8a96a0"/><path d="M21 22 L24.5 23.5 L28 21" fill="none" stroke="#333" stroke-width="1"/><path d="M25 15.5 Q18 16 17 22 L15.5 22 L19.5 27.5 L22.5 21.5 L20.5 21.8 Q21.5 18 25.5 17.8Z" fill="#22c022"/></svg><div class="it" style="left:625px;top:412px;letter-spacing:0.292px">Options de l'Explorateur de</div><div class="it" style="left:625px;top:433px;letter-spacing:0.286px">fichiers</div><svg class="ic" style="left:582px;top:417px" width="32" height="32" viewBox="0 0 32 32"><path d="M5.5 2.5 H25.5 V29.5 H5.5Z" fill="#fde08c" stroke="#e6c040" stroke-width="1"/><path d="M8 3 V29" stroke="#fff4c8" stroke-width="0.8"/><path d="M24.5 19 L27.5 21 L27.5 29.5 L24.5 29.5Z" fill="#f8d070" stroke="#e6c040" stroke-width="0.8"/><rect x="14.75" y="4.95" width="14.5" height="10.100000000000001" fill="#fafafa" stroke="#80868c" stroke-width="1.5"/><rect x="15.5" y="5.7" width="13" height="2" fill="#80868c"/><path d="M18.5 9.9 L19.9 11.3 L22.7 7.8" fill="none" stroke="#2a8ee0" stroke-width="1.26"/><path d="M18.5 13.700000000000001 L19.9 15.100000000000001 L22.7 11.600000000000001" fill="none" stroke="#2a8ee0" stroke-width="1.26"/><path d="M23.5 10.5H27.5M23.5 14H27.5" stroke="#b0b0b0" stroke-width="0.8"/></svg><div class="it" style="left:625px;top:462px;letter-spacing:0.18px">Périphériques et</div><div class="it" style="left:625px;top:483px;letter-spacing:0.53px">imprimantes</div><svg class="ic" style="left:582px;top:467px" width="32" height="32" viewBox="0 0 32 32"><path d="M3 12 L12 7.5 L28.5 11.5 L20 16Z" fill="#3a3e44"/><path d="M10 11.5 L15.5 9.5 L21.5 11 L16 13Z" fill="#6aa8e8"/><path d="M3 12 L20 16 L20 23 L3 19Z" fill="#ececec"/><path d="M20 16 L28.5 11.5 L28.5 19 L20 23Z" fill="#b0b0b0"/><path d="M4.5 15.5 L11 17 L11 19 L4.5 17.5Z" fill="#222"/><path d="M1 19 L12 21.5 L12 25 L1 22.5Z" fill="none" stroke="#3a3e44" stroke-width="1.2"/><rect x="11" y="18" width="3" height="12" fill="#9a9a9a"/><path d="M14 18.5 L24.7 20.5 L24.7 30.7 L14 29Z" fill="#f0f0f0" stroke="#c8c8c8" stroke-width="0.5"/><circle cx="19.5" cy="25" r="3.4" fill="#7a8088" stroke="#bbb" stroke-width="0.8"/><circle cx="19.2" cy="24.8" r="1.3" fill="#2a8aa0"/></svg><div class="it" style="left:625px;top:522px;letter-spacing:-0.03px">Reconnaissance vocale</div><svg class="ic" style="left:582px;top:517px" width="32" height="32" viewBox="0 0 32 32"><path d="M8 14 V24 L14 29 M25.5 14 V24 L19 29" fill="none" stroke="#4a4e5a" stroke-width="1.3"/><path d="M8.5 14.5 V23.7 L14 28.3 M25 14.5 V23.7 L19 28.3" fill="none" stroke="#fff" stroke-width="0.5"/><rect x="14.5" y="26" width="4.5" height="4" fill="#d8dae6" stroke="#555" stroke-width="0.7"/><defs><linearGradient id="gMic" x1="0" x2="1"><stop offset="0" stop-color="#6a6e88"/><stop offset="0.45" stop-color="#ffffff"/><stop offset="1" stop-color="#7a7e98"/></linearGradient></defs><rect x="11" y="0.5" width="11" height="23.5" rx="5.5" fill="url(#gMic)" stroke="#5a5e70" stroke-width="0.6"/><path d="M11.5 8.5H21.5M11.5 10.5H21.5M11.5 12.5H21.5M11.5 14.5H21.5M11.5 16.5H21.5" stroke="#6a6e7a" stroke-width="0.8"/></svg><div class="it" style="left:625px;top:562px;letter-spacing:0.204px">Sauvegarder et restaurer</div><div class="it" style="left:625px;top:583px;letter-spacing:0.44px">(Windows 7)</div><svg class="ic" style="left:582px;top:567px" width="32" height="32" viewBox="0 0 32 32"><path d="M0 25 L8.0 20 L28 23.0 L16.8 27.5Z" fill="url(#gDriveT)" stroke="#aaa" stroke-width="0.5"/><path d="M0 25 L16.8 27.5 L16.8 31 L0 28.5Z" fill="url(#gDriveF)" stroke="#999" stroke-width="0.5"/><path d="M16.8 27.5 L28 23.0 L28 26 L16.8 31Z" fill="url(#gDriveS)"/><rect x="14.3" y="29.0" width="2" height="0.5" fill="#22cc22" stroke="#502a80" stroke-width="0.4"/><circle cx="23" cy="15.4" r="8.5" fill="#d8d8dc" stroke="#9a9a9a" stroke-width="0.6"/><path d="M23 15.4 L31 13 A8.5 8.5 0 0 1 31 18.5Z" fill="#e080c0" opacity="0.7"/><path d="M23 15.4 L30.5 19 A8.5 8.5 0 0 1 28 22Z" fill="#f0f080"/><circle cx="23" cy="15.4" r="2.6" fill="#aaa" stroke="#666" stroke-width="0.5"/><circle cx="23" cy="15.4" r="0.9" fill="#fff"/><path d="M4.5 1.5 Q10 5 10 12 L14 12 L8 20.5 L4.5 11.5 L7.5 12 Q7.5 7 4 3Z" fill="#30d030"/><path d="M14 7.5 L19.5 3 L22.5 9.5 L19.5 9.5 Q19.5 16 22.5 21 L20 21 Q15 15 16.5 8Z" fill="#40e040"/></svg><div class="it" style="left:625px;top:622px;letter-spacing:0.1px">Système</div><svg class="ic" style="left:582px;top:617px" width="32" height="32" viewBox="0 0 32 32"><path d="M1 24.5 L9 22.5 L25 27.5 L17 30.5Z" fill="#d8dde2"/><path d="M3 24.6L10 22.8M6 25.6L13 23.7M9 26.6L16 24.7M12 27.6L19 25.7M15 28.6L22 26.7" stroke="#b8c0c8" stroke-width="0.6"/><path d="M15.5 22.5 L20 21.5 L28 24 L23.5 26Z" fill="#d4d8dc"/><path d="M10.3 3.2 L30.4 9 L30.4 22.8 L10.3 16.3Z" fill="url(#gMon10)" stroke="#3a3a3a" stroke-width="0.7"/><path d="M16.5 11.5 L19.5 14.5 L24.5 9.5" fill="none" stroke="#fff" stroke-width="1.5"/></svg><div class="it" style="left:875px;top:212px;letter-spacing:0.362px">Chiffrement de lecteur</div><div class="it" style="left:875px;top:233px;letter-spacing:0.05px">BitLocker</div><svg class="ic" style="left:832px;top:217px" width="32" height="32" viewBox="0 0 32 32"><path d="M1 9 L15 3.5 L31.5 6.5 L18 12Z" fill="#e0e0e4" stroke="#b0b0b0" stroke-width="0.5"/><path d="M1 9 L18 12 L18 18 L1 14.5Z" fill="url(#gDriveF)" stroke="#a0a0a0" stroke-width="0.5"/><path d="M18 12 L31.5 6.5 L31.5 11 L18 18Z" fill="#bcbcbc"/><path d="M17.5 11 V7 Q17.5 1.5 21 1.5 Q25 1.5 25 7 V11" fill="none" stroke="#b08a20" stroke-width="2.2"/><path d="M14 10.3 L27.7 11.5 L27.7 21 L14 20.5Z" fill="url(#gGold)" stroke="#a8801a" stroke-width="0.6"/><path d="M25.5 20 L31.5 28.5" stroke="#a07810" stroke-width="2.2"/><circle cx="21.5" cy="20.5" r="2.8" fill="#a08020" stroke="#c0c0c0" stroke-width="1.8"/><path d="M21.5 23 V31" stroke="#a8a8a8" stroke-width="2.2"/><path d="M22.5 26H23.5M22.5 28.5H23.5" stroke="#777" stroke-width="1"/></svg><div class="it" style="left:875px;top:272px;letter-spacing:0.133px">Date et heure</div><svg class="ic" style="left:832px;top:267px" width="32" height="32" viewBox="0 0 32 32"><rect x="1.5" y="9.5" width="23" height="20" fill="#fafcfd" stroke="#b0b0b0" stroke-width="1"/><rect x="3" y="11" width="20" height="2.2" fill="#30b0d8"/><rect x="12.9" y="14.0" width="2.2" height="2.2" fill="#18a0c8"/><rect x="15.9" y="14.0" width="2.2" height="2.2" fill="#18a0c8"/><rect x="18.9" y="14.0" width="2.2" height="2.2" fill="#18a0c8"/><rect x="21.9" y="14.0" width="2.2" height="2.2" fill="#18a0c8"/><rect x="3.9" y="17.1" width="2.2" height="2.2" fill="#18a0c8"/><rect x="6.9" y="17.1" width="2.2" height="2.2" fill="#18a0c8"/><rect x="9.9" y="17.1" width="2.2" height="2.2" fill="#18a0c8"/><rect x="12.9" y="17.1" width="2.2" height="2.2" fill="#18a0c8"/><rect x="15.9" y="17.1" width="2.2" height="2.2" fill="#18a0c8"/><rect x="18.9" y="17.1" width="2.2" height="2.2" fill="#18a0c8"/><rect x="21.9" y="17.1" width="2.2" height="2.2" fill="#18a0c8"/><rect x="3.9" y="20.2" width="2.2" height="2.2" fill="#18a0c8"/><rect x="6.9" y="20.2" width="2.2" height="2.2" fill="#18a0c8"/><rect x="9.9" y="20.2" width="2.2" height="2.2" fill="#18a0c8"/><rect x="12.9" y="20.2" width="2.2" height="2.2" fill="#18a0c8"/><rect x="15.9" y="20.2" width="2.2" height="2.2" fill="#18a0c8"/><rect x="18.9" y="20.2" width="2.2" height="2.2" fill="#18a0c8"/><rect x="21.9" y="20.2" width="2.2" height="2.2" fill="#18a0c8"/><rect x="3.9" y="23.3" width="2.2" height="2.2" fill="#18a0c8"/><rect x="6.9" y="23.3" width="2.2" height="2.2" fill="#18a0c8"/><rect x="9.9" y="23.3" width="2.2" height="2.2" fill="#18a0c8"/><rect x="12.9" y="23.3" width="2.2" height="2.2" fill="#18a0c8"/><rect x="15.9" y="23.3" width="2.2" height="2.2" fill="#18a0c8"/><rect x="18.9" y="23.3" width="2.2" height="2.2" fill="#18a0c8"/><rect x="21.9" y="23.3" width="2.2" height="2.2" fill="#18a0c8"/><rect x="3.9" y="26.4" width="2.2" height="2.2" fill="#18a0c8"/><rect x="6.9" y="26.4" width="2.2" height="2.2" fill="#18a0c8"/><rect x="9.9" y="26.4" width="2.2" height="2.2" fill="#18a0c8"/><rect x="12.9" y="26.4" width="2.2" height="2.2" fill="#18a0c8"/><circle cx="23" cy="9" r="8" fill="url(#gClock)" stroke="#a8b0b8" stroke-width="0.8"/><path d="M23 3 V10 H27.5" fill="none" stroke="#6a7884" stroke-width="1"/></svg><div class="it" style="left:875px;top:322px;letter-spacing:0.121px">Gestion des couleurs</div><svg class="ic" style="left:832px;top:317px" width="32" height="32" viewBox="0 0 32 32"><path d="M7.5 1.5 L32 4 L31 22 L6.5 19Z" fill="url(#gMon)" stroke="#d8d0b0" stroke-width="0.8"/><path d="M20 23 Q26 23 29 27 L20 28Z" fill="#d0d0d0"/><path d="M12.5 7 L25 8.5 L23 18 L19.5 19 L13 16Z" fill="url(#gCube)"/><path d="M25 8.5 L28 9 L26 17.5 L23 18Z" fill="url(#gCubeS)"/><path d="M0.5 9.5 H12.5 L16.5 13.5 V30.5 H0.5Z" fill="#fff" stroke="#9a9a9a" stroke-width="1"/><path d="M12.5 9.5 V13.5 H16.5" fill="#eee" stroke="#9a9a9a" stroke-width="0.8"/><path d="M3 16.5 L12 16 L12.5 25 L9 27.5 L3 25Z" fill="url(#gCube)"/><path d="M12 16 L14 17 L14 24.5 L12.5 25Z" fill="url(#gCubeS)"/></svg><div class="it" style="left:875px;top:372px;letter-spacing:0.486px">Options d’alimentation</div><svg class="ic" style="left:832px;top:367px" width="32" height="32" viewBox="0 0 32 32"><path d="M0.5 1 Q2 9 7 11" fill="none" stroke="#30304a" stroke-width="1.5"/><path d="M23.5 6.5 Q30 6 30.5 11.5 Q30.5 16 26 19" fill="none" stroke="#30304a" stroke-width="1.8"/><path d="M6.3 5 V27.5 Q15 32.5 23.9 27.5 V5Z" fill="url(#gBatt)"/><ellipse cx="15.1" cy="5" rx="8.8" ry="3.5" fill="#e4e4ec" stroke="#c0c0c8" stroke-width="0.6"/><ellipse cx="15.5" cy="3.5" rx="2.5" ry="1" fill="#90c8e8"/><path d="M11 20 L22 16.5 L27.5 18.5 L26 23.5 L15 27.5 L12 24Z" fill="#3c3e48"/><path d="M6.5 24.5 L12.5 22 M10.5 27.5 L16 25" stroke="#c8a860" stroke-width="1.6" stroke-linecap="round"/></svg><div class="it" style="left:875px;top:422px;letter-spacing:0.393px">Options Internet</div><svg class="ic" style="left:832px;top:417px" width="32" height="32" viewBox="0 0 32 32"><circle cx="12.4" cy="12.5" r="12.3" fill="url(#gGlobe)"/><path d="M0.7149999999999999 11.27 C2.5599999999999987 3.8900000000000006 6.25 0.8149999999999995 11.17 0.44599999999999973 L9.325 5.734999999999999 L5.635 6.965 L3.790000000000001 13.115Z" fill="#3ac83a"/><path d="M19.165 3.2749999999999986 C22.855 6.35 24.700000000000003 11.27 24.085 16.19 L21.009999999999998 14.96 L19.78 8.81Z" fill="#2ab82a"/><path d="M5.635 16.805 L11.17 18.035 L11.785 22.955 C8.71 22.340000000000003 6.25 20.495 5.635 16.805Z" fill="#2aa02a"/><ellipse cx="8.71" cy="6.965" rx="3.69" ry="2.4600000000000004" fill="#fff" opacity="0.45"/><rect x="9.95" y="12.95" width="20.5" height="17.0" fill="#fafafa" stroke="#80868c" stroke-width="1.5"/><rect x="10.7" y="13.7" width="19.0" height="2" fill="#dfe3e8"/><path d="M13.5 20.8 L15.3 22.6 L18.9 18.1" fill="none" stroke="#1a88c8" stroke-width="1.62"/><path d="M13.5 25.8 L15.3 27.6 L18.9 23.1" fill="none" stroke="#1a88c8" stroke-width="1.62"/><path d="M20.5 21.5H27.5M20.5 26.5H27.5" stroke="#6a5e88" stroke-width="1.1"/></svg><div class="it" style="left:875px;top:472px;letter-spacing:-0.317px">Polices</div><svg class="ic" style="left:832px;top:467px" width="32" height="32" viewBox="0 0 32 32"><rect x="5" y="4" width="16" height="21.7" fill="url(#gFold)"/><path d="M5 4 L12.5 10 L12 30.7 L5 26.7Z" fill="#fbe49c"/><path d="M12.5 10 L12 30.7" stroke="#f0d070" stroke-width="0.6"/><path d="M20.3 13.8 H22.6 L27.6 28 H24.2Z M20.3 13.8 L21.3 15.8 L16.4 28 H15.1Z M17.6 22.6 H25.2 L25.8 24.2 H17Z M13.5 27.6 H18.8 V28.9 H13.5Z M22.4 27.6 H28.9 V28.9 H22.4Z" fill="#0a78d8"/></svg><div class="it" style="left:875px;top:522px;letter-spacing:0.218px">Récupération</div><svg class="ic" style="left:832px;top:517px" width="32" height="32" viewBox="0 0 32 32"><path d="M22 22.5 L27 21.5 L30 24.5 L24.5 25.5Z" fill="#d4d8dc"/><path d="M10.3 3 L30.4 9 L30.4 22.8 L10.3 16.3Z" fill="url(#gMon10)" stroke="#3a3a3a" stroke-width="0.7"/><circle cx="12.4" cy="21.8" r="7.2" fill="url(#gClock)" stroke="#a8b0b8" stroke-width="1"/><circle cx="18.02" cy="21.80" r="0.35" fill="#8a96a0"/><circle cx="17.26" cy="24.61" r="0.35" fill="#8a96a0"/><circle cx="15.21" cy="26.66" r="0.35" fill="#8a96a0"/><circle cx="12.40" cy="27.42" r="0.35" fill="#8a96a0"/><circle cx="9.59" cy="26.66" r="0.35" fill="#8a96a0"/><circle cx="7.54" cy="24.61" r="0.35" fill="#8a96a0"/><circle cx="6.78" cy="21.80" r="0.35" fill="#8a96a0"/><circle cx="7.54" cy="18.99" r="0.35" fill="#8a96a0"/><circle cx="9.59" cy="16.94" r="0.35" fill="#8a96a0"/><circle cx="12.40" cy="16.18" r="0.35" fill="#8a96a0"/><circle cx="15.21" cy="16.94" r="0.35" fill="#8a96a0"/><circle cx="17.26" cy="18.99" r="0.35" fill="#8a96a0"/><path d="M9 21.5 L12.5 22.5 L16 20" fill="none" stroke="#333" stroke-width="1"/><path d="M13 14.2 Q6.5 14.8 5.5 21 L3.5 21 L7.5 27.5 L11 20.5 L8.7 21 Q9.5 16.8 13.5 16.5Z" fill="#22c022"/></svg><div class="it" style="left:875px;top:572px;letter-spacing:0.164px">Sécurité et maintenance</div><svg class="ic" style="left:832px;top:567px" width="32" height="32" viewBox="0 0 32 32"><path d="M2.5 4 L12.3 30.3" stroke="#5a5a5a" stroke-width="2.4" stroke-linecap="round"/><path d="M2.7 4.5 L12.2 30" stroke="#e8e8e8" stroke-width="0.8" stroke-dasharray="1.5 1"/><circle cx="2.6" cy="3.3" r="1.9" fill="#8a8a8a"/><circle cx="2.3" cy="3" r="0.8" fill="#d0d0d0"/><path d="M3.5 7.5 Q9.5 8 15.5 3.5 Q19 2.5 21.5 7.5 Q24.5 10 31.8 8.2 Q30 13.5 25 17.5 Q22.5 19 20.3 16.8 Q14 17.5 8.3 22.8Z" fill="url(#gFlag)"/><path d="M5.5 9 Q11 9 15.8 5.5 M10 20.5 Q15 16.5 20.5 15.5 M23.5 12.5 Q27.5 13 30 10.5" stroke="#b8c8ff" stroke-width="0.6" fill="none"/></svg><div class="it" style="left:875px;top:622px;letter-spacing:0.188px">Téléphone et modem</div><svg class="ic" style="left:832px;top:617px" width="32" height="32" viewBox="0 0 32 32"><path d="M1 21 L8 17.5 L29.8 21 L29.8 24.5 L18 29.4 L1 25.5Z" fill="#9c9ea2"/><path d="M1 21 L18 25 L18 29.4 L1 25.5Z" fill="#dde0e4" stroke="#8a8c90" stroke-width="0.5"/><path d="M18 25 L29.8 21 L29.8 24.5 L18 29.4Z" fill="#7a7c80"/><path d="M3 23.2 L16 26.6" stroke="#2a8ad8" stroke-width="2.2" stroke-dasharray="1.4 0.7"/><path d="M5 20 L13 9.5 L26.5 10.5 L28.5 20.5 L17.5 24.5Z" fill="#e6e8ea" stroke="#8a8c90" stroke-width="0.7"/><path d="M26.5 10.5 L28.5 20.5 L29.5 20 L27.5 10.5Z" fill="#a0a2a6"/><path d="M15.5 10.3 L25.8 11.2 L25.3 14.2 L15 13.3Z" fill="#2a78d8" stroke="#1a4a90" stroke-width="0.4"/><path d="M2.8 20.5 Q4 12 12 5.8 L15.5 7 Q8 13 6.8 20.8Z" fill="#dcdcdc" stroke="#7a7a7a" stroke-width="0.7"/><path d="M9.5 17.5 L13.8 10" stroke="#2a2a2a" stroke-width="1.3"/><rect x="14.0" y="15.5" width="2" height="1.3" fill="#6878a0"/><rect x="12.5" y="17.8" width="2" height="1.3" fill="#6878a0"/><rect x="11.0" y="20.1" width="2" height="1.3" fill="#6878a0"/><rect x="17.6" y="15.8" width="2" height="1.3" fill="#6878a0"/><rect x="16.1" y="18.1" width="2" height="1.3" fill="#6878a0"/><rect x="14.6" y="20.4" width="2" height="1.3" fill="#6878a0"/><rect x="21.2" y="16.1" width="2" height="1.3" fill="#6878a0"/><rect x="19.7" y="18.4" width="2" height="1.3" fill="#6878a0"/><rect x="18.2" y="20.7" width="2" height="1.3" fill="#6878a0"/></svg>
<svg style="position:absolute;left:0;top:0" width="1251" height="849"><ellipse cx="685.5" cy="230.75" rx="130.6" ry="27.8" fill="none" stroke="#ec1c24" stroke-width="8" shape-rendering="crispEdges"/></svg>
</body></html>
